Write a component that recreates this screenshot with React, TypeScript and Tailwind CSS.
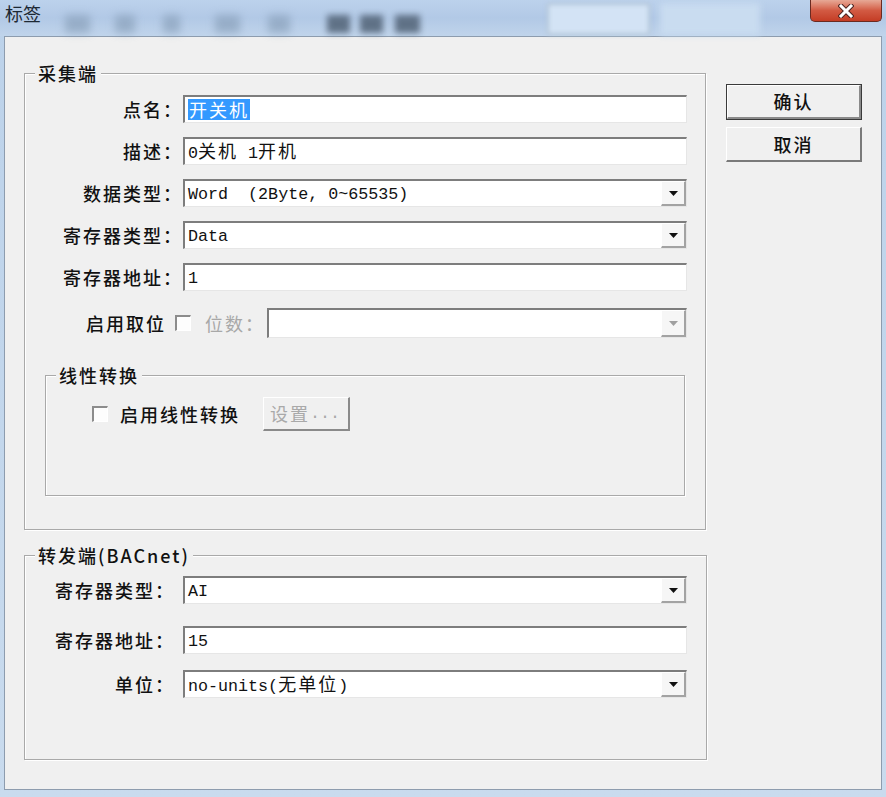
import React from "react";

const CJK = /([\u2E80-\u9FFF\uFF00-\uFFEF\u3000-\u303F]+)/;

function Mixed({ text, mono = true }: { text: string; mono?: boolean }) {
  const parts = text.split(CJK).filter((p) => p.length > 0);
  return (
    <>
      {parts.map((p, i) =>
        CJK.test(p) ? (
          <span key={i} className="font-['Noto_Sans_CJK_SC',sans-serif] text-[18px] tracking-[2px]">
            {p}
          </span>
        ) : mono ? (
          <span key={i} className="font-['Liberation_Mono',monospace] text-[16.7px] whitespace-pre">
            {p}
          </span>
        ) : (
          <span key={i} className="font-['Noto_Sans_CJK_SC',sans-serif] text-[18px] whitespace-pre">
            {p}
          </span>
        )
      )}
    </>
  );
}

function Arrow({ disabled = false }: { disabled?: boolean }) {
  return (
    <div className="ml-auto h-full w-[25px] shrink-0 flex items-center justify-center bg-[#f6f6f6] border-l border-t border-l-[#ffffff] border-t-[#ffffff] border-r-2 border-b-2 border-r-[#a3a3a3] border-b-[#a3a3a3]">
      <svg width="9" height="5" viewBox="0 0 9 5">
        <path d="M0 0 H9 L4.5 5 Z" fill={disabled ? "#a0a0a0" : "#111111"} />
      </svg>
    </div>
  );
}

function Field({
  value,
  combo = false,
  selected = false,
  disabled = false,
  width = "w-[504px]",
  height = "h-[28px]",
}: {
  value?: string;
  combo?: boolean;
  selected?: boolean;
  disabled?: boolean;
  width?: string;
  height?: string;
}) {
  return (
    <div
      className={`${width} ${height} shrink-0 flex items-center bg-white border-t-2 border-l-2 border-t-[#7d7d7d] border-l-[#7d7d7d] border-r border-b border-r-[#e6e6e6] border-b-[#e6e6e6] text-[#111]`}
    >
      <div className="pl-[3px] flex items-center h-full">
        {value !== undefined &&
          (selected ? (
            <span className="bg-[#3399ff] text-white leading-[20px] px-[1px]">
              <Mixed text={value} />
            </span>
          ) : (
            <span className="leading-[20px]">
              <Mixed text={value} />
            </span>
          ))}
      </div>
      {combo && <Arrow disabled={disabled} />}
    </div>
  );
}

function Check() {
  return (
    <div className="w-[16px] h-[16px] shrink-0 bg-[#fdfdfd] border-t-2 border-l-2 border-t-[#8c8c8c] border-l-[#8c8c8c] border-r border-b border-r-[#ffffff] border-b-[#ffffff]" />
  );
}

function Row1({ label, children, mt }: { label: string; children: React.ReactNode; mt: string }) {
  return (
    <div className={`flex items-center ${mt}`}>
      <div className="w-[158px] shrink-0 text-right tracking-[2px] text-[18px] leading-[22px] font-medium text-[#111]">{label}</div>
      {children}
    </div>
  );
}

function Row2({ label, children, mt }: { label: string; children: React.ReactNode; mt: string }) {
  return (
    <div className={`flex items-center ${mt}`}>
      <div className="w-[150px] shrink-0 text-right tracking-[2px] text-[18px] leading-[22px] font-medium text-[#111] mr-[8px]">{label}</div>
      {children}
    </div>
  );
}

const groupCls =
  "border border-[#a9a9a9] shadow-[inset_1px_1px_0_#ffffff,1px_1px_0_#ffffff] m-0 p-0 min-w-0";
const legendCls =
  "ml-[10px] px-[3px] p-0 bg-[#f0f0f0] text-[18px] leading-[20px] tracking-[2px] font-medium text-[#111]";

const faint = "mt-[15px] h-[18px] shrink-0 bg-[#8299b3] opacity-60 blur-[4px]";
const dark = "mt-[15px] h-[18px] shrink-0 bg-[#4a5b6e] opacity-80 blur-[3px]";

export default function App() {
  return (
    <div className="w-[886px] h-[797px] flex flex-col overflow-hidden bg-gradient-to-b from-[#bcd2ea] to-[#c9dbee] font-['Noto_Sans_CJK_SC',sans-serif]">
      {/* Title bar */}
      <div className="h-[36px] shrink-0 flex items-start bg-gradient-to-b from-[#bcd2ec] via-[#b2c9e6] to-[#c0d4eb]">
        <div className="pl-[5px] pt-[2px] text-[18px] leading-[22px] text-[#1d2833] w-[60px] shrink-0">标签</div>
        <div className={`${faint} ml-[5px] w-[25px]`} />
        <div className={`${faint} ml-[25px] w-[20px]`} />
        <div className={`${faint} ml-[28px] w-[17px]`} />
        <div className={`${faint} ml-[35px] w-[25px]`} />
        <div className={`${faint} ml-[28px] w-[22px]`} />
        <div className={`${dark} ml-[37px] w-[23px]`} />
        <div className={`${dark} ml-[10px] w-[23px]`} />
        <div className={`${dark} ml-[12px] w-[25px]`} />
        <div className="mt-[3px] ml-[127px] w-[103px] h-[32px] shrink-0 bg-[#d3e3f5] border-2 border-[#b3c4d6] blur-[2px]" />
        <div className="mt-[3px] ml-[10px] w-[100px] h-[32px] shrink-0 bg-[#c9dcf0] blur-[3px]" />
        <div className="ml-auto mr-[4px] w-[72px] h-[22px] shrink-0 rounded-b-[5px] border border-t-0 border-[#6b2a20] bg-gradient-to-b from-[#e6a896] via-[#d25a43] to-[#c43c24] flex items-center justify-center">
          <svg width="16" height="14" viewBox="0 0 16 14">
            <path d="M3 2 L13 12 M13 2 L3 12" stroke="#4a2420" strokeWidth="5" strokeLinecap="square" />
            <path d="M3 2 L13 12 M13 2 L3 12" stroke="#ffffff" strokeWidth="3" strokeLinecap="square" />
          </svg>
        </div>
      </div>

      {/* Frame body */}
      <div className="flex-1 flex px-[4px] pb-[7px]">
        <div className="flex-1 flex bg-[#f0f0f0] border border-[#8d9cae] pl-[19px] pt-[26px]">
          {/* Left column */}
          <div className="w-[683px] shrink-0 flex flex-col">
            <fieldset className={`${groupCls} w-[682px]`}>
              <legend className={legendCls}>采集端</legend>
              <div className="flex flex-col pt-[12px]">
                <Row1 label="点名：" mt="mt-0">
                  <Field value="开关机" selected />
                </Row1>
                <Row1 label="描述：" mt="mt-[14px]">
                  <Field value="0关机 1开机" />
                </Row1>
                <Row1 label="数据类型：" mt="mt-[14px]">
                  <Field value="Word  (2Byte, 0~65535)" combo />
                </Row1>
                <Row1 label="寄存器类型：" mt="mt-[14px]">
                  <Field value="Data" combo />
                </Row1>
                <Row1 label="寄存器地址：" mt="mt-[14px]">
                  <Field value="1" />
                </Row1>
                <div className="flex items-center mt-[17px] pl-[61px]">
                  <div className="text-[18px] leading-[22px] tracking-[2px] font-medium text-[#111] w-[80px] shrink-0">启用取位</div>
                  <div className="ml-[9px]">
                    <Check />
                  </div>
                  <div className="ml-[14px] text-[18px] leading-[22px] tracking-[2px] text-[#a8a8a8] w-[60px] shrink-0">位数：</div>
                  <div className="ml-[2px]">
                    <Field combo disabled width="w-[420px]" height="h-[30px]" />
                  </div>
                </div>

                <fieldset className={`${groupCls} mx-[20px] mt-[27px] mb-[33px] w-[640px]`}>
                  <legend className={legendCls}>线性转换</legend>
                  <div className="h-[110px] pt-[12px] pl-[46px]">
                    <div className="flex items-center h-[34px]">
                      <Check />
                      <div className="ml-[12px] text-[18px] leading-[22px] tracking-[2px] font-medium text-[#111] w-[120px] shrink-0">启用线性转换</div>
                      <div className="ml-[23px] w-[87px] h-[34px] flex items-center pl-[6px] bg-[#f0f0f0] border-t border-l border-t-[#ffffff] border-l-[#ffffff] border-r-2 border-b-2 border-r-[#8a8a8a] border-b-[#8a8a8a] text-[#a9a9a9]">
                        <Mixed text="设置..." />
                      </div>
                    </div>
                  </div>
                </fieldset>
              </div>
            </fieldset>

            <fieldset className={`${groupCls} w-[683px] mt-[15px]`}>
              <legend className={legendCls}>
                <Mixed text="转发端(BACnet)" mono={false} />
              </legend>
              <div className="flex flex-col pt-[11px] pb-[61px]">
                <Row2 label="寄存器类型：" mt="mt-0">
                  <Field value="AI" combo />
                </Row2>
                <Row2 label="寄存器地址：" mt="mt-[22px]">
                  <Field value="15" />
                </Row2>
                <Row2 label="单位：" mt="mt-[16px]">
                  <Field value="no-units(无单位)" combo />
                </Row2>
              </div>
            </fieldset>
          </div>

          {/* Right column: buttons */}
          <div className="ml-[19px] w-[136px] shrink-0 flex flex-col pt-[21px]">
            <div className="h-[36px] border border-[#3a3a3a] flex">
              <div className="flex-1 flex items-center justify-center bg-[#f0f0f0] border-t border-l border-t-[#ffffff] border-l-[#ffffff] border-r-2 border-b-2 border-r-[#8a8a8a] border-b-[#8a8a8a] text-[18px] tracking-[2px] font-medium text-[#111]">
                确认
              </div>
            </div>
            <div className="mt-[7px] h-[35px] flex items-center justify-center bg-[#f0f0f0] border-t border-l border-t-[#ffffff] border-l-[#ffffff] border-r-2 border-b-2 border-r-[#7a7a7a] border-b-[#7a7a7a] text-[18px] tracking-[2px] font-medium text-[#111]">
              取消
            </div>
          </div>
        </div>
      </div>
    </div>
  );
}
